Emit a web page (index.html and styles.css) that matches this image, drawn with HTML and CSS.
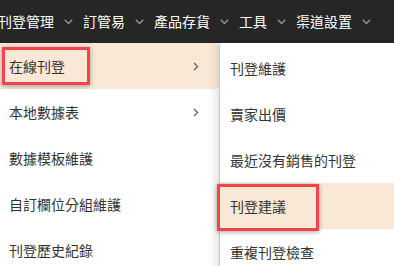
FILE: index.html
```html
<!DOCTYPE html>
<html lang="zh-Hant">
<head>
  <meta charset="UTF-8">
  <meta name="viewport" content="width=device-width, initial-scale=1.0">
  <title>刊登管理</title>
  <link rel="stylesheet" href="styles.css">
</head>
<body>
  <nav class="topbar">
    <span class="nav-item">刊登管理</span>
    <svg class="caret" viewBox="0 0 9 6"><path d="M0.8 0.8 L4.5 4.6 L8.2 0.8"/></svg>
    <span class="nav-item">訂管易</span>
    <svg class="caret" viewBox="0 0 9 6"><path d="M0.8 0.8 L4.5 4.6 L8.2 0.8"/></svg>
    <span class="nav-item">產品存貨</span>
    <svg class="caret" viewBox="0 0 9 6"><path d="M0.8 0.8 L4.5 4.6 L8.2 0.8"/></svg>
    <span class="nav-item">工具</span>
    <svg class="caret" viewBox="0 0 9 6"><path d="M0.8 0.8 L4.5 4.6 L8.2 0.8"/></svg>
    <span class="nav-item">渠道設置</span>
    <svg class="caret" viewBox="0 0 9 6"><path d="M0.8 0.8 L4.5 4.6 L8.2 0.8"/></svg>
  </nav>

  <div class="menus">
    <ul class="menu">
      <li class="row active">在線刊登
        <svg class="arrow" viewBox="0 0 6 9"><path d="M1 1 L4.6 4.5 L1 8"/></svg>
      </li>
      <li class="row">本地數據表
        <svg class="arrow" viewBox="0 0 6 9"><path d="M1 1 L4.6 4.5 L1 8"/></svg>
      </li>
      <li class="row">數據模板維護</li>
      <li class="row">自訂欄位分組維護</li>
      <li class="row">刊登歷史紀錄</li>
    </ul>

    <ul class="submenu">
      <li class="row">刊登維護</li>
      <li class="row">賣家出價</li>
      <li class="row">最近沒有銷售的刊登</li>
      <li class="row active">刊登建議</li>
      <li class="row">重複刊登檢查</li>
    </ul>
  </div>

  <div class="mark mark-left"></div>
  <div class="mark mark-right"></div>
</body>
</html>
```

FILE: styles.css
```css
body { margin: 0; background: #fff; font-family: "Noto Sans CJK TC", "Noto Sans", sans-serif; font-size: 14px; color: #333; overflow: hidden; }
ul { list-style: none; margin: 0; padding: 0; }

.topbar { height: 43px; background: #262626; display: flex; align-items: center; padding-left: 0; margin-left: -2px; white-space: nowrap; }
.nav-item { color: #fff; line-height: 20px; padding-bottom: 2px; }
.caret { width: 9px; height: 6px; margin: 0 10px; fill: none; stroke: #8d94a0; stroke-width: 1.4; }

.menus { display: flex; }
.menu { width: 219px; flex-shrink: 0; }
.submenu { flex: 1; border-left: 1px solid #c8c8c8; border-top-left-radius: 3px; box-shadow: -3px 0 8px rgba(0, 0, 0, 0.12); padding-top: 2px; min-height: 240px; }

.row { height: 46px; display: flex; align-items: center; justify-content: space-between; line-height: 20px; }
.menu .row { padding: 0 20px 0 9px; }
.submenu .row { padding-left: 10px; }
.row.active { background: #f9e8d5; }
.menu .row.active { border-radius: 0 4px 4px 0; }
.arrow { width: 6px; height: 9px; fill: none; stroke: #666; stroke-width: 1.3; }

.mark { position: absolute; border: 3px solid #f2454b; box-shadow: 0 1px 5px rgba(0, 0, 0, 0.35); }
.mark-left { left: 2px; top: 47px; width: 82px; height: 32px; }
.mark-right { left: 217px; top: 184px; width: 96px; height: 41px; }
```
